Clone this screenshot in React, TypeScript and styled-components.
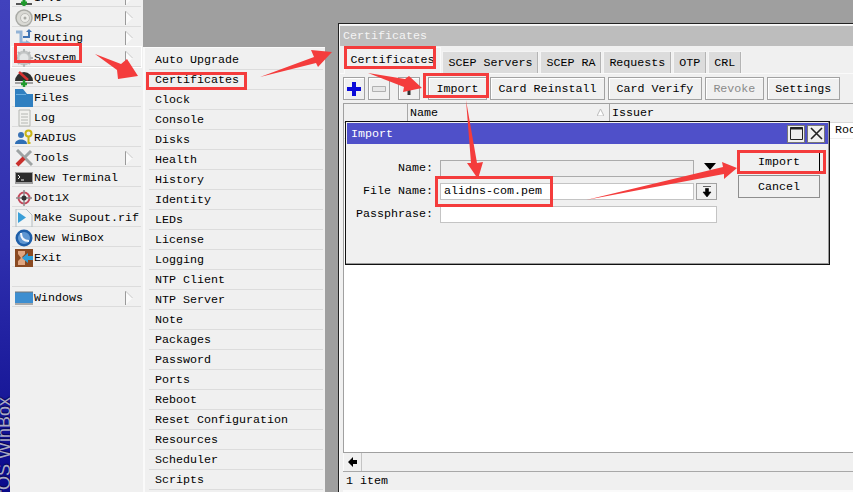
import styled, { createGlobalStyle } from 'styled-components';

const GlobalStyle = createGlobalStyle`
  html, body {
    margin: 0;
    padding: 0;
    overflow: hidden;
    background: #9f9f9f;
  }
  * { box-sizing: border-box; }
`;

const mono = `"Liberation Mono", "DejaVu Sans Mono", monospace`;

type IconName =
  | 'ipv6' | 'mpls' | 'routing' | 'system' | 'queues' | 'files' | 'log' | 'radius'
  | 'tools' | 'terminal' | 'dot1x' | 'supout' | 'winbox' | 'exit' | 'windows';

const MenuIcon = ({ name }: { name: IconName }) => {
  switch (name) {
    case 'ipv6':
      return (
        <svg width="18" height="18" viewBox="0 0 18 18">
          <path d="M1 15h16" stroke="#555" strokeWidth="2" />
          <path d="M9 10v7M6 14h6" stroke="#1f9a2c" strokeWidth="3" />
        </svg>
      );
    case 'mpls':
      return (
        <svg width="18" height="18" viewBox="0 0 18 18">
          <circle cx="9" cy="9" r="8" fill="#d9d9d4" stroke="#a9aaa5" strokeWidth="1.5" />
          <circle cx="10" cy="9" r="4.5" fill="#ecece8" stroke="#bcbcb8" />
          <circle cx="10" cy="9" r="1.5" fill="#a9aaa5" />
        </svg>
      );
    case 'routing':
      return (
        <svg width="18" height="18" viewBox="0 0 18 18">
          <path d="M1 3h5v11h5" fill="none" stroke="#93b4d6" strokeWidth="3" />
          <path d="M8 8h6V2" fill="none" stroke="#3f74b4" strokeWidth="2" />
          <path d="M11 3l3-3 3 3z" fill="#3f74b4" />
          <path d="M11 11v6l5-3z" fill="#93b4d6" />
        </svg>
      );
    case 'system':
      return (
        <svg width="18" height="18" viewBox="0 0 18 18">
          <circle cx="9" cy="9" r="6" fill="#e4e6e6" stroke="#c3c6c6" strokeWidth="3" />
          <path d="M9 0v3M9 15v3M0 9h3M15 9h3M3 3l2 2M13 13l2 2M15 3l-2 2M5 13l-2 2" stroke="#b4b8b8" strokeWidth="2" />
        </svg>
      );
    case 'queues':
      return (
        <svg width="18" height="18" viewBox="0 0 18 18">
          <path d="M0 12a9 9 0 0 1 18 0z" fill="#2d2d2d" />
          <path d="M4 3l9 8" stroke="#d8312f" strokeWidth="2.5" />
          <path d="M0 14h18" stroke="#888" strokeWidth="1.5" />
          <path d="M9 11v7M6 15h6" stroke="#1f9a2c" strokeWidth="2.5" />
        </svg>
      );
    case 'files':
      return (
        <svg width="18" height="18" viewBox="0 0 18 18">
          <path d="M0 0h8l4 5h6v13H0z" fill="#2f7fc0" />
          <path d="M1 5h10v1H1z" fill="#6aaee0" />
        </svg>
      );
    case 'log':
      return (
        <svg width="18" height="18" viewBox="0 0 18 18">
          <path d="M4 1h11v16H4z" fill="#f1f1ee" stroke="#b4b6b2" />
          <path d="M6 5h7M6 8h7M6 11h7M6 14h7" stroke="#b4b6b2" />
        </svg>
      );
    case 'radius':
      return (
        <svg width="18" height="18" viewBox="0 0 18 18">
          <circle cx="6" cy="6" r="3" fill="#3a72b5" />
          <path d="M0 15c0-6 12-6 12 0z" fill="#2f6fb5" />
          <circle cx="13.5" cy="4.5" r="3" fill="none" stroke="#c9b418" strokeWidth="2" />
          <path d="M13.5 7v7l2 0" fill="none" stroke="#c9b418" strokeWidth="2" />
        </svg>
      );
    case 'tools':
      return (
        <svg width="18" height="18" viewBox="0 0 18 18">
          <path d="M2 1l15 15" stroke="#9ea3a3" strokeWidth="3" />
          <path d="M16 2L9 9" stroke="#9ea3a3" strokeWidth="3" />
          <path d="M9 9l-7 7" stroke="#c9302c" strokeWidth="4" />
        </svg>
      );
    case 'terminal':
      return (
        <svg width="18" height="18" viewBox="0 0 18 18">
          <path d="M0 3h18v12H0z" fill="#9c9c9c" />
          <path d="M1 4h16v9H1z" fill="#2b2b2b" />
          <path d="M3 6l2 2-2 2M6 11h3" fill="none" stroke="#f0f0f0" />
        </svg>
      );
    case 'dot1x':
      return (
        <svg width="18" height="18" viewBox="0 0 18 18">
          <circle cx="9" cy="9" r="5.5" fill="none" stroke="#c2495c" strokeWidth="2" />
          <path d="M9 1v16M1 9h16" stroke="#8a8a8a" strokeWidth="1.5" />
          <circle cx="9" cy="9" r="2.5" fill="#333" />
        </svg>
      );
    case 'supout':
      return (
        <svg width="18" height="18" viewBox="0 0 18 18">
          <path d="M1 0h10l6 6v12H1z" fill="#f2f4f4" stroke="#b5bcc0" />
          <path d="M3 3v11l8-5.5z" fill="#3a9fd8" />
        </svg>
      );
    case 'winbox':
      return (
        <svg width="18" height="18" viewBox="0 0 18 18">
          <circle cx="9" cy="9" r="8.5" fill="#1e5ea8" />
          <circle cx="9" cy="9" r="6" fill="#5f97d2" />
          <path d="M6 4c0 6 3 8 8 8" fill="none" stroke="#f2f6fb" strokeWidth="2" />
        </svg>
      );
    case 'exit':
      return (
        <svg width="18" height="18" viewBox="0 0 18 18">
          <path d="M0 0h18v18H0z" fill="#8a4a22" />
          <path d="M3 2h7v3L7 8l3 3v5H3v-4l3-3-3-4z" fill="#e0a680" />
          <path d="M7 9l6-5v3h5v4h-5v3z" fill="#2f9ed8" />
        </svg>
      );
    case 'windows':
      return (
        <svg width="18" height="18" viewBox="0 0 18 18">
          <path d="M0 3h18v11H0z" fill="#3d8ed0" />
          <path d="M0 14h18v2H0z" fill="#a8a8a8" />
          <path d="M0 3h18" stroke="#777" />
        </svg>
      );
  }
};

const mainMenu: { label: string; icon?: IconName; sub?: boolean; active?: boolean }[] = [
  { label: 'IPv6', icon: 'ipv6', sub: true },
  { label: 'MPLS', icon: 'mpls', sub: true },
  { label: 'Routing', icon: 'routing', sub: true },
  { label: 'System', icon: 'system', sub: true, active: true },
  { label: 'Queues', icon: 'queues' },
  { label: 'Files', icon: 'files' },
  { label: 'Log', icon: 'log' },
  { label: 'RADIUS', icon: 'radius' },
  { label: 'Tools', icon: 'tools', sub: true },
  { label: 'New Terminal', icon: 'terminal' },
  { label: 'Dot1X', icon: 'dot1x' },
  { label: 'Make Supout.rif', icon: 'supout' },
  { label: 'New WinBox', icon: 'winbox' },
  { label: 'Exit', icon: 'exit' },
  { label: '' },
  { label: 'Windows', icon: 'windows', sub: true },
];

const systemMenu = [
  'Auto Upgrade', 'Certificates', 'Clock', 'Console', 'Disks', 'Health', 'History', 'Identity',
  'LEDs', 'License', 'Logging', 'NTP Client', 'NTP Server', 'Note', 'Packages', 'Password',
  'Ports', 'Reboot', 'Reset Configuration', 'Resources', 'Scheduler', 'Scripts',
];

const tabs = ['Certificates', 'SCEP Servers', 'SCEP RA', 'Requests', 'OTP', 'CRL'];

const SubArrow = () => (
  <ArrowSlot>
    <svg width="8" height="14" viewBox="0 0 8 14">
      <path d="M.5 0v14L7.5 7z" fill="#fafafa" />
      <path d="M.5 0v14" stroke="#9a9a9a" />
      <path d="M.5 0L7.5 7" stroke="#c8c8c8" />
    </svg>
  </ArrowSlot>
);

const App = () => {
  return (
    <Page>
      <GlobalStyle />
      <SideStrip>
        <StripText>RouterOS WinBox</StripText>
      </SideStrip>

      <MainMenu>
        {mainMenu.map((item, i) => (
          <MenuRow key={i} $active={item.active}>
            <IconSlot>{item.icon && <MenuIcon name={item.icon} />}</IconSlot>
            {item.label}
            {item.sub && <SubArrow />}
          </MenuRow>
        ))}
      </MainMenu>

      <PopupMenu>
        {systemMenu.map((label) => (
          <PopupRow key={label}>{label}</PopupRow>
        ))}
      </PopupMenu>

      <Window>
        <WindowTitle>Certificates</WindowTitle>
        <TabBar>
          {tabs.map((tab, i) => (
            <Tab key={tab} $active={i === 0}>{tab}</Tab>
          ))}
        </TabBar>

        <Toolbar>
          <IconButton>
            <svg width="14" height="14" viewBox="0 0 14 14">
              <path d="M7 0v14M0 7h14" stroke="#0a0ad8" strokeWidth="4" />
            </svg>
          </IconButton>
          <IconButton>
            <svg width="14" height="6" viewBox="0 0 14 6">
              <path d="M.5.5h13v5H.5z" fill="#e6e6e6" stroke="#b0b0b0" />
            </svg>
          </IconButton>
          <FilterButton>
            <svg width="14" height="14" viewBox="0 0 14 14">
              <path d="M1 1h12L8.5 7v6h-3V7z" fill="#333" />
            </svg>
          </FilterButton>
          <ToolButton>Import</ToolButton>
          <ToolButton>Card Reinstall</ToolButton>
          <ToolButton>Card Verify</ToolButton>
          <ToolButton $disabled>Revoke</ToolButton>
          <ToolButton>Settings</ToolButton>
        </Toolbar>

        <Table>
          <TableHeader>
            <HeaderCell $width={64} />
            <HeaderCell $width={202}>
              Name
              <SortMark>
                <svg width="7" height="7" viewBox="0 0 7 7">
                  <path d="M3.5 0L7 7H0z" fill="#fff" stroke="#bbb" />
                </svg>
              </SortMark>
            </HeaderCell>
            <HeaderCell $width={300}>Issuer</HeaderCell>
          </TableHeader>
          <TableBody>
            <IssuerValue>Root CA</IssuerValue>
          </TableBody>
        </Table>

        <ScrollRow>
          <ScrollButton>
            <svg width="10" height="10" viewBox="0 0 10 10">
              <path d="M0 5l5-5v3h4v4H5v3z" fill="#000" />
            </svg>
          </ScrollButton>
        </ScrollRow>
        <StatusRow>1 item</StatusRow>

        <Dialog>
          <DialogTitle>
            Import
            <TitleButton>
              <svg width="13" height="13" viewBox="0 0 13 13">
                <path d="M.5.5h12v12H.5z" fill="#eee" stroke="#222" />
                <path d="M0 1.5h13" stroke="#222" strokeWidth="2" />
              </svg>
            </TitleButton>
            <TitleButton>
              <svg width="13" height="13" viewBox="0 0 13 13">
                <path d="M1 1l11 11M12 1L1 12" stroke="#222" strokeWidth="1.6" />
              </svg>
            </TitleButton>
          </DialogTitle>
          <DialogBody>
            <Form>
              <FieldLabel>Name:</FieldLabel>
              <FieldRow>
                <Field $disabled />
                <FieldIcon>
                  <svg width="12" height="7" viewBox="0 0 12 7">
                    <path d="M0 0h12L6 7z" fill="#000" />
                  </svg>
                </FieldIcon>
              </FieldRow>
              <FieldLabel>File Name:</FieldLabel>
              <FieldRow>
                <Field>alidns-com.pem</Field>
                <FieldButton>
                  <svg width="10" height="11" viewBox="0 0 10 11">
                    <path d="M1 .5h8M3.5 2.5h3V6H9l-4 5-4-5h2.5z" fill="#000" stroke="#000" strokeWidth=".6" />
                  </svg>
                </FieldButton>
              </FieldRow>
              <FieldLabel>Passphrase:</FieldLabel>
              <FieldRow>
                <Field />
              </FieldRow>
            </Form>
            <DialogActions>
              <DialogButton $primary>Import</DialogButton>
              <DialogButton>Cancel</DialogButton>
            </DialogActions>
          </DialogBody>
        </Dialog>
      </Window>

      <Highlight $x={14} $y={43} $w={68} $h={20} />
      <Highlight $x={146} $y={72} $w={101} $h={18} />
      <Highlight $x={344} $y={46} $w={92} $h={23} />
      <Highlight $x={423} $y={73} $w={66} $h={25} />
      <Highlight $x={435} $y={176} $w={118} $h={31} />
      <Highlight $x={737} $y={150} $w={89} $h={24} />

      <ArrowLayer width="853" height="492" viewBox="0 0 853 492">
        <polygon points="95,54 121,64 127,59 138,76 118,79 117,70" />
        <polygon points="260,77 314,57 311,50 332,52 318,67 316,63" />
        <polygon points="368,73 405,79 409,76 422,88 403,92 404,87" />
        <polygon points="466,100 477,163 483,162 478,179 467,163 471,163" />
        <polygon points="586,200 723,167 722,162 737,168 724,179 724,174" />
      </ArrowLayer>
    </Page>
  );
};

const Page = styled.div`
  position: relative;
  display: flex;
  width: 853px;
  height: 492px;
  overflow: hidden;
  background: #9f9f9f;
  font-family: ${mono};
  font-size: 11.67px;
  color: #000;
`;

const SideStrip = styled.div`
  flex: none;
  width: 10px;
  overflow: hidden;
  background: linear-gradient(180deg, #4142bd 0%, #2f2fae 50%, #0a0a8c 100%);
`;

const StripText = styled.div`
  margin-top: 397px;
  margin-left: -2px;
  width: 12px;
  line-height: 12px;
  white-space: nowrap;
  writing-mode: vertical-rl;
  transform: rotate(180deg);
  font-family: "Liberation Sans", Arial, sans-serif;
  font-size: 18px;
  color: #a9a9c4;
  text-shadow: 1px 0 1px #05054a;
`;

const MainMenu = styled.div`
  flex: none;
  width: 133px;
  margin-top: -13px;
  padding: 0 2px;
  background: #f0f0f0;
`;

const MenuRow = styled.div<{ $active?: boolean }>`
  display: flex;
  align-items: center;
  height: 20px;
  padding: 2px 0 0 3px;
  white-space: nowrap;
  border-bottom: 1px solid #dcdcdc;
  outline: ${(p) => (p.$active ? '1px solid #fff' : 'none')};
`;

const IconSlot = styled.span`
  flex: none;
  display: flex;
  width: 19px;
  height: 18px;
`;

const ArrowSlot = styled.span`
  display: flex;
  margin-left: auto;
  margin-right: 8px;
`;

const PopupMenu = styled.div`
  flex: none;
  width: 182px;
  margin-top: 47px;
  padding: 2px 2px 0 4px;
  background: #f0f0f0;
  border-top: 1px solid #fafafa;
  border-left: 2px solid #fafafa;
`;

const PopupRow = styled.div`
  height: 20px;
  padding-left: 6px;
  line-height: 21px;
  border-bottom: 1px solid #dcdcdc;
`;

const Window = styled.div`
  position: relative;
  flex: none;
  display: flex;
  flex-direction: column;
  width: 560px;
  margin: 23px 0 0 13px;
  padding: 1px 0 0 1px;
  background: #f0f0f0;
  border-top: 1px solid #222;
  border-left: 1px solid #222;
  box-shadow: inset 1px 1px 0 #fafafa;
`;

const WindowTitle = styled.div`
  flex: none;
  height: 20px;
  margin-top: 1px;
  padding-left: 3px;
  line-height: 20px;
  background: #bdbdbd;
  color: #f4f4f4;
`;

const TabBar = styled.div`
  flex: none;
  display: flex;
  align-items: flex-end;
  gap: 1px;
  height: 28px;
  padding-left: 4px;
  border-bottom: 1px solid #fafafa;
`;

const Tab = styled.div<{ $active?: boolean }>`
  display: flex;
  align-items: center;
  height: ${(p) => (p.$active ? '27px' : '22px')};
  margin-bottom: ${(p) => (p.$active ? '-1px' : '0')};
  padding: 0 5.5px ${(p) => (p.$active ? '3px' : '0')};
  background: ${(p) => (p.$active ? '#f0f0f0' : '#dcdcdc')};
  border: 1px solid ${(p) => (p.$active ? '#fafafa' : '#f4f4f4')};
  border-bottom: none;
  box-shadow: ${(p) => (p.$active ? 'none' : 'inset -1px 0 0 #b4b4b4')};
`;

const Toolbar = styled.div`
  flex: none;
  display: flex;
  align-items: center;
  gap: 3px;
  height: 29px;
  padding: 3px 0 3px 3px;
`;

const ToolButton = styled.div<{ $disabled?: boolean }>`
  flex: none;
  display: flex;
  align-items: center;
  height: 23px;
  padding: 0 7.5px;
  background: #f0f0f0;
  border: 1px solid #a2a2a2;
  box-shadow: inset 1px 1px 0 #fff;
  color: ${(p) => (p.$disabled ? '#8a8a8a' : '#000')};
`;

const IconButton = styled(ToolButton)`
  justify-content: center;
  width: 22px;
  padding: 0;
`;

const FilterButton = styled(IconButton)`
  margin-left: 5px;
  margin-right: 5px;
`;

const Table = styled.div`
  flex: 1;
  display: flex;
  flex-direction: column;
  min-height: 0;
  margin-left: 3px;
  background: #fff;
  border-top: 1px solid #a0a0a0;
  border-left: 1px solid #a0a0a0;
  border-bottom: 1px solid #a0a0a0;
`;

const TableHeader = styled.div`
  flex: none;
  display: flex;
  height: 19px;
  background: #f0f0f0;
`;

const HeaderCell = styled.div<{ $width: number }>`
  position: relative;
  flex: none;
  width: ${(p) => p.$width}px;
  padding-left: 2px;
  line-height: 18px;
  border-right: 1px solid #a8a8a8;
  border-bottom: 1px solid #d8d8d8;
`;

const SortMark = styled.span`
  position: absolute;
  right: 5px;
  top: 5px;
  display: flex;
`;

const TableBody = styled.div`
  flex: 1;
`;

const IssuerValue = styled.div`
  height: 16px;
  padding-left: 491px;
  line-height: 14px;
  white-space: nowrap;
  overflow: hidden;
  border-bottom: 1px solid #eeeeee;
`;

const ScrollRow = styled.div`
  flex: none;
  display: flex;
  height: 19px;
  margin-left: 3px;
  border-bottom: 1px solid #a8a8a8;
`;

const ScrollButton = styled.div`
  display: flex;
  align-items: center;
  justify-content: center;
  width: 19px;
  border-left: 1px solid #fafafa;
  border-right: 1px solid #c4c4c4;
`;

const StatusRow = styled.div`
  flex: none;
  height: 20px;
  margin-left: 3px;
  padding-left: 3px;
  line-height: 18px;
  border-bottom: 2px solid #fafafa;
`;

const Dialog = styled.div`
  position: absolute;
  left: 6px;
  top: 97px;
  display: flex;
  flex-direction: column;
  width: 485px;
  height: 144px;
  padding: 1px;
  background: #f0f0f0;
  border: 1px solid #111;
  box-shadow: inset -1px -1px 0 #9a9a9a;
`;

const DialogTitle = styled.div`
  flex: none;
  display: flex;
  align-items: center;
  gap: 2px;
  height: 21px;
  padding: 0 3px 0 4px;
  background: #4f50c9;
  color: #fff;

  > :first-of-type {
    margin-left: auto;
  }
`;

const TitleButton = styled.span`
  display: flex;
  align-items: center;
  justify-content: center;
  width: 18px;
  height: 18px;
  background: #efefef;
  border: 1px solid #777;
`;

const DialogBody = styled.div`
  flex: 1;
  display: flex;
  gap: 21px;
`;

const Form = styled.div`
  display: grid;
  grid-template-columns: 84px 277px;
  grid-auto-rows: 17px;
  column-gap: 7px;
  row-gap: 6px;
  align-content: start;
  padding-top: 16px;
  margin-left: 2px;
`;

const FieldLabel = styled.div`
  text-align: right;
  line-height: 17px;
  white-space: nowrap;
`;

const FieldRow = styled.div`
  display: flex;
  gap: 2px;
`;

const Field = styled.div<{ $disabled?: boolean }>`
  flex: 1;
  padding-left: 3px;
  line-height: 15px;
  background: ${(p) => (p.$disabled ? '#eeeeee' : '#fff')};
  border: 1px solid ${(p) => (p.$disabled ? '#ababab' : '#c4c4c4')};
`;

const FieldIcon = styled.div`
  flex: none;
  display: flex;
  justify-content: center;
  align-items: flex-start;
  width: 21px;
  padding: 3px 0 0 6px;
`;

const FieldButton = styled.div`
  flex: none;
  display: flex;
  align-items: center;
  justify-content: center;
  width: 21px;
  border: 1px solid #a2a2a2;
`;

const DialogActions = styled.div`
  display: flex;
  flex-direction: column;
  gap: 2px;
  width: 82px;
  padding-top: 6px;
`;

const DialogButton = styled.div<{ $primary?: boolean }>`
  display: flex;
  align-items: center;
  justify-content: center;
  height: 23px;
  background: #f0f0f0;
  border: 1px solid #8e8e8e;
  border-top-color: ${(p) => (p.$primary ? '#000' : '#8e8e8e')};
  border-right-color: ${(p) => (p.$primary ? '#000' : '#8e8e8e')};
`;

const Highlight = styled.div<{ $x: number; $y: number; $w: number; $h: number }>`
  position: absolute;
  left: ${(p) => p.$x}px;
  top: ${(p) => p.$y}px;
  width: ${(p) => p.$w}px;
  height: ${(p) => p.$h}px;
  border: 3px solid #f43c3c;
  pointer-events: none;
`;

const ArrowLayer = styled.svg`
  position: absolute;
  left: 0;
  top: 0;
  pointer-events: none;
  fill: #f43c3c;
`;

export default App;
